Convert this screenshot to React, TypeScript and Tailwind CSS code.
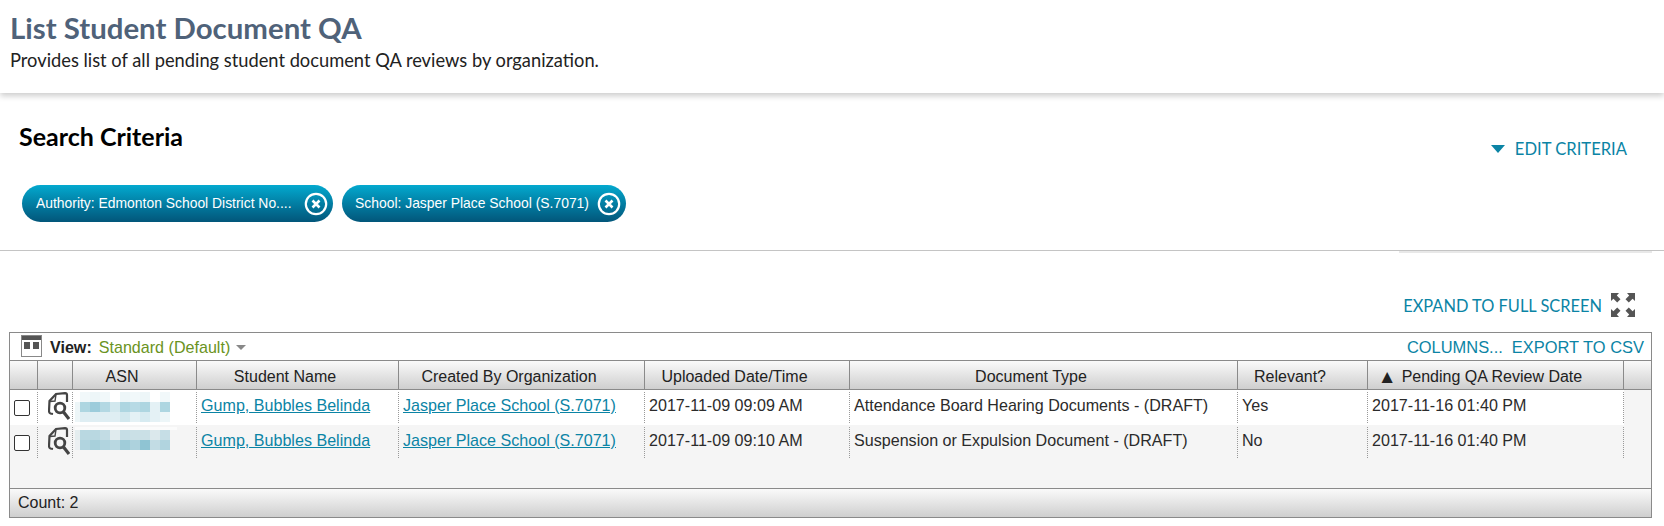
const gridCols = "grid grid-cols-[28px_35px_124px_202px_246px_205px_388px_130px_256px_1fr]";

const rows = [
  {
    uploaded: "2017-11-09 09:09 AM",
    type: "Attendance Board Hearing Documents - (DRAFT)",
    relevant: "Yes",
    offset: 0,
    blur: [
      [0, 0.08, 0.1, 0.08, 0, 0.1, 0.08, 0.1, 0, 0.08],
      [0.1, 0.45, 0.55, 0.42, 0.25, 0.45, 0.4, 0.45, 0.15, 0.45],
      [0.1, 0.18, 0.18, 0.18, 0.18, 0.25, 0.15, 0.22, 0.15, 0.1],
    ],
    last: false,
  },
  {
    uploaded: "2017-11-09 09:10 AM",
    type: "Suspension or Expulsion Document - (DRAFT)",
    relevant: "No",
    offset: 3,
    blur: [
      [0.1, 0.35, 0.35, 0.3, 0.12, 0.28, 0.25, 0.25, 0.15, 0.28],
      [0.05, 0.4, 0.45, 0.4, 0.35, 0.5, 0.42, 0.6, 0.3, 0.4],
    ],
    last: true,
  },
];

function DocSearchIcon() {
  return (
    <svg width="22" height="29" viewBox="0 0 22 29" fill="none" stroke="#444" strokeWidth="2.2">
      <path d="M5 22 L2.5 21.5 Q1 21 1 19 L1.5 9 L8 2 L17 1.2 Q19 1.2 19 3 L19 10" />
      <path d="M1.5 9.5 L7 9 L8 2.5" strokeWidth="1.4" />
      <circle cx="12" cy="16" r="4.8" strokeWidth="2.8" />
      <path d="M15.5 20 L21 27" strokeWidth="3.2" />
    </svg>
  );
}

function ExpandIcon() {
  return (
    <svg width="26" height="26" viewBox="0 0 26 26" fill="#555" className="-mt-[3px]">
      <path d="M1 1 H9 L6.8 3.4 L10.5 7.2 L7.2 10.5 L3.4 6.8 L1 9 Z" />
      <path d="M25 1 H17 L19.2 3.4 L15.5 7.2 L18.8 10.5 L22.6 6.8 L25 9 Z" />
      <path d="M1 25 H9 L6.8 22.6 L10.5 18.8 L7.2 15.5 L3.4 19.2 L1 17 Z" />
      <path d="M25 25 H17 L19.2 22.6 L15.5 18.8 L18.8 15.5 L22.6 19.2 L25 17 Z" />
    </svg>
  );
}

function ViewIcon() {
  return (
    <svg width="21" height="22" viewBox="0 0 21 22">
      <rect x="0.5" y="0.5" width="20" height="21" fill="#fff" stroke="#888" />
      <rect x="1" y="1" width="19" height="4" fill="#555" />
      <rect x="3" y="7" width="6" height="7" fill="#555" />
      <rect x="12" y="7" width="6" height="7" fill="#555" />
    </svg>
  );
}

function PillClose() {
  return (
    <svg width="24" height="24" viewBox="0 0 24 24" fill="none" stroke="#fff" className="shrink-0">
      <circle cx="12" cy="12" r="10.2" strokeWidth="2.2" />
      <path d="M8.5 8.5 L15.5 15.5 M15.5 8.5 L8.5 15.5" strokeWidth="2.6" />
    </svg>
  );
}

// pixelated ASN: a narrow first column, then 10px blocks
function BlurredValue({ cells, offset }: { cells: number[][]; offset: number }) {
  return (
    <svg width="102" height="31" className="block">
      {offset > 0 && <rect x="0" y="0" width="102" height={offset} fill="#fbfbfb" />}
      {cells.map((row, y) =>
        row.map((o, x) => (
          <rect
            key={`${x}-${y}`}
            x={x === 0 ? 0 : x * 10 - 5}
            y={offset + y * 10}
            width={x === 0 ? 5 : 10}
            height="10"
            fill="#4ba3bd"
            opacity={o}
          />
        ))
      )}
    </svg>
  );
}

function HeaderCell({ children, className = "" }: { children?: React.ReactNode; className?: string }) {
  return (
    <div className={`flex items-center justify-center pt-[3px] border-r border-[#8a8a8a] text-[16px] text-[#222] ${className}`}>
      {children}
    </div>
  );
}

function Cell({ children, className = "" }: { children?: React.ReactNode; className?: string }) {
  return (
    <div className={`h-[31px] border-r border-dotted border-[#999] flex text-[16.1px] text-[#2b2b2b] whitespace-nowrap ${className}`}>
      {children}
    </div>
  );
}

const link = "text-[#0b84a5] underline";
const textCell = "pl-[4px] pb-[4px] items-center";
const headText = "pr-[25px]";

export default function App() {
  return (
    <div className="w-[1664px] h-[526px] overflow-hidden bg-white font-['Liberation_Sans',Arial,sans-serif]">
      <div className="h-[93px] pt-[9px] pl-[10px] font-['Lato',sans-serif] shadow-[0_3px_6px_rgba(0,0,0,0.2)] relative">
        <h1 className="text-[29.4px] leading-[38px] font-bold text-[#4f6279]">List Student Document QA</h1>
        <p className="text-[18.3px] leading-[25px] mt-[1px] text-[#222]">Provides list of all pending student document QA reviews by organization.</p>
      </div>

      <div className="mt-[9px] h-[149px] border-b border-[#c4c4c4] flex justify-between">
        <div className="pl-[19px] pt-[18px]">
          <h2 className="font-['Lato',sans-serif] font-bold text-[25px] leading-[32px] text-black">Search Criteria</h2>
          <div className="flex gap-[9px] mt-[33px] ml-[3px] text-[13.9px] text-white">
            <div className="w-[311px] h-[37px] pl-[14px] pr-[5px] flex items-center justify-between rounded-full bg-gradient-to-b from-[#03a9cf] to-[#02567a]">
              <span>Authority: Edmonton School District No....</span>
              <PillClose />
            </div>
            <div className="w-[284px] h-[37px] pl-[13px] pr-[5px] flex items-center justify-between rounded-full bg-gradient-to-b from-[#03a9cf] to-[#02567a]">
              <span>School: Jasper Place School (S.7071)</span>
              <PillClose />
            </div>
          </div>
        </div>
        <div className="pr-[37px] pt-[35px] flex items-start gap-[9px] font-['Lato',sans-serif] text-[16.6px] text-[#0b84a5]">
          <svg width="14" height="8" viewBox="0 0 14 8" className="mt-[8px] mr-[1px]" fill="#0b84a5">
            <path d="M0 0 H14 L7 8 Z" />
          </svg>
          <span className="leading-[24px]">EDIT CRITERIA</span>
        </div>
      </div>
      <div className="ml-auto mr-[12px] w-[253px] h-[2px] bg-[#e8e8e8]" />

      <div className="mt-[37px] pr-[28px] h-[32px] flex justify-end items-center gap-[8px] font-['Lato',sans-serif] text-[16.4px] text-[#0b84a5]">
        <span>EXPAND TO FULL SCREEN</span>
        <ExpandIcon />
      </div>

      <div className="mt-[10px] ml-[9px] w-[1643px] border border-[#8a8a8a] bg-[#f5f5f5]">
        <div className="h-[28px] bg-white flex items-center justify-between pl-[11px] pr-[7px] text-[16.1px] border-b border-[#8a8a8a]">
          <div className="flex items-center">
            <ViewIcon />
            <span className="ml-[8px] pt-[2px] font-bold text-[#222]">View:</span>
            <span className="ml-[7px] pt-[2px] text-[#6a9322]">Standard (Default)</span>
            <span className="ml-[6px] mt-[2px] w-0 h-0 border-x-[5px] border-x-transparent border-t-[5px] border-t-[#888]" />
          </div>
          <div className="flex gap-[9px] pt-[2px] text-[16.45px] text-[#0b84a5]">
            <span>COLUMNS...</span>
            <span>EXPORT TO CSV</span>
          </div>
        </div>

        <div className={`${gridCols} h-[29px] border-b border-[#8a8a8a] bg-gradient-to-b from-[#fafafa] to-[#cfcfcf]`}>
          <HeaderCell />
          <HeaderCell />
          <HeaderCell className={headText}>ASN</HeaderCell>
          <HeaderCell className={headText}>Student Name</HeaderCell>
          <HeaderCell className={headText}>Created By Organization</HeaderCell>
          <HeaderCell className={headText}>Uploaded Date/Time</HeaderCell>
          <HeaderCell className={headText}>Document Type</HeaderCell>
          <HeaderCell className={headText}>Relevant?</HeaderCell>
          <HeaderCell className="pr-[31px]">
            <span className="text-[19px] leading-[20px] mr-[5px]">▲</span>
            Pending QA Review Date
          </HeaderCell>
          <div />
        </div>

        <div className="h-[98px]">
          {rows.map((r) => (
            <div key={r.uploaded} className={`${gridCols} ${r.last ? "" : "bg-white"} h-[35px] py-[2px]`}>
              <Cell className="pl-[4px] items-center">
                <span className="w-[16px] h-[16px] border-[1.5px] border-[#333] rounded-[2px] bg-white" />
              </Cell>
              <Cell className="pl-[10px] items-start">
                <DocSearchIcon />
              </Cell>
              <Cell className="pl-[2px] items-start">
                <BlurredValue cells={r.blur} offset={r.offset} />
              </Cell>
              <Cell className={textCell}><a className={link}>Gump, Bubbles Belinda</a></Cell>
              <Cell className={textCell}><a className={link}>Jasper Place School (S.7071)</a></Cell>
              <Cell className={textCell}>{r.uploaded}</Cell>
              <Cell className={textCell}>{r.type}</Cell>
              <Cell className={textCell}>{r.relevant}</Cell>
              <Cell className={textCell}>2017-11-16 01:40 PM</Cell>
              <div className={r.last ? "" : "bg-[#f5f5f5] -my-[2px]"} />
            </div>
          ))}
        </div>

        <div className="h-[29px] border-t border-[#8a8a8a] pl-[8px] flex items-center text-[16px] text-[#222] bg-gradient-to-b from-[#fafafa] to-[#cfcfcf]">
          Count: 2
        </div>
      </div>
    </div>
  );
}
